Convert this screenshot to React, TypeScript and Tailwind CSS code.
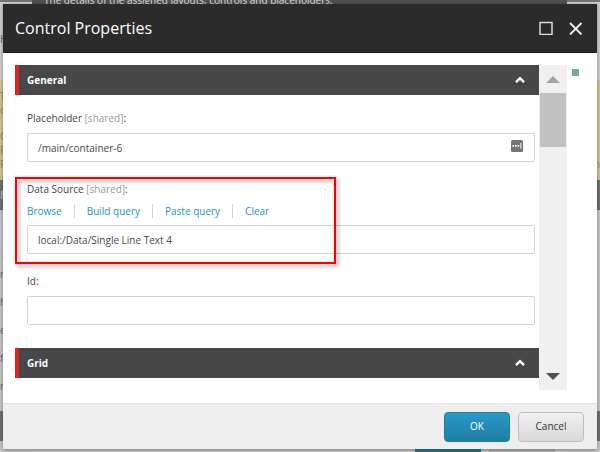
import React from "react";

const actions = ["Browse", "Build query", "Paste query", "Clear"];

function Backdrop() {
  return (
    <div aria-hidden="true" className="absolute inset-0 overflow-hidden text-[10px] leading-[14px] text-[#666]">
      <div className="flex h-full flex-col bg-[#c6c6c6]">
        <div className="h-20 shrink-0 border-t-2 border-[#747474] bg-[#d0d0d0] pt-[30px]">H</div>
        <div className="flex h-[100px] shrink-0 justify-between bg-[#d0c594] pt-[9px] text-[#8f8763]">
          <div>
            <p>T</p>
            <p>c</p>
            <p className="mt-3">C</p>
            <p>F</p>
            <p>P</p>
          </div>
          <p className="pt-[68px]">m</p>
        </div>
        <div className="h-[30px] shrink-0 bg-[#707070] pt-2 font-bold text-[#b8b8b8]">N</div>
        <div className="flex h-[201px] shrink-0 flex-col gap-[14px] pt-[57px]">
          <p>r</p>
          <p>h</p>
          <p>e</p>
          <p>f</p>
          <p>n</p>
        </div>
        <div className="h-[30px] shrink-0 bg-[#707070]" />
      </div>
      <div className="absolute inset-y-0 left-8 right-[33px] flex flex-col justify-between bg-[#c8c8c8]">
        <div className="h-10 bg-[#505050]">
          <p className="-mt-2 whitespace-nowrap pl-3 text-[10px] leading-4 text-[#e0e0e0]">
            The details of the assigned layouts, controls and placeholders.
          </p>
        </div>
        <div className="flex h-8 justify-end gap-2 pr-3">
          <div className="w-[66px] bg-[#257a98]" />
          <div className="w-[66px] bg-[#b2b2b2]" />
        </div>
      </div>
    </div>
  );
}

function SectionHeader({ title }: { title: string }) {
  return (
    <button
      type="button"
      aria-expanded="true"
      className="flex h-[30px] w-full items-center justify-between border-l-4 border-[#e2231a] bg-[#474747] pl-2 pr-[14px] text-[10px] font-bold text-white"
    >
      {title}
      <svg width="10" height="8" viewBox="0 0 10 8" fill="none" stroke="currentColor" strokeWidth="2.4">
        <path d="M1 6.2 5 2.2l4 4" />
      </svg>
    </button>
  );
}

function Label({ id, text, shared }: { id: string; text: string; shared?: boolean }) {
  return (
    <label htmlFor={id} className="block leading-4 text-[#444]">
      {text}
      {shared && <span className="text-[#9a9a9a]"> [shared]</span>}:
    </label>
  );
}

function TextBox({ id, value }: { id: string; value: string }) {
  return (
    <input
      id={id}
      type="text"
      defaultValue={value}
      className="block h-[29px] w-full rounded-xs border border-[#d4d4d4] bg-white px-[10px] text-[10px] text-[#484848] outline-none"
    />
  );
}

export default function App() {
  return (
    <div className="relative min-h-screen overflow-hidden px-[3px] pb-[3px] pt-1 font-['Open_Sans','Noto_Sans',sans-serif] text-[10px]">
      <Backdrop />
      <section
        role="dialog"
        aria-labelledby="dialog-title"
        className="relative bg-white shadow-[0_1px_4px_rgba(0,0,0,0.4)]"
      >
        <header className="flex h-[49px] items-center justify-between border-b border-[#1c1c1c] bg-[#2b2b2b] pl-3 pr-[14px] text-white">
          <h1 id="dialog-title" className="text-[16px] leading-5">
            Control Properties
          </h1>
          <div className="flex items-center gap-4">
            <button type="button" aria-label="Maximize">
              <svg width="14" height="14" viewBox="0 0 14 14" fill="none" stroke="#e4e4e4" strokeWidth="1.4">
                <rect x="1" y="1.5" width="12" height="12" />
              </svg>
            </button>
            <button type="button" aria-label="Close">
              <svg width="14" height="14" viewBox="0 0 14 14" fill="none" stroke="#f0f0f0" strokeWidth="1.8">
                <path d="m1 2 11.5 11.5M12.5 2 1 13.5" />
              </svg>
            </button>
          </div>
        </header>

        <div className="flex pb-[13px] pl-3 pt-3">
          <div className="min-w-0 flex-1 pb-3">
            <SectionHeader title="General" />
            <div className="flex flex-col gap-[19px] pb-[23px] pl-3 pr-1 pt-[15px]">
              <div className="flex flex-col gap-[7px]">
                <Label id="placeholder" text="Placeholder" shared />
                <div className="relative">
                  <TextBox id="placeholder" value="/main/container-6" />
                  <svg className="absolute right-3 top-[7px]" width="12" height="12" viewBox="0 0 12 12">
                    <rect width="12" height="12" rx="1.5" fill="#747474" />
                    <path d="M1.4 5h1.6v1.8H1.4zM4 5h1.6v1.8H4zM6.6 5h1.6v1.8H6.6zM9.4 3h1v5.8h-1z" fill="#fff" />
                  </svg>
                </div>
              </div>
              <div className="relative flex flex-col gap-[6px]">
                <Label id="datasource" text="Data Source" shared />
                <nav className="flex h-4 items-center divide-x divide-[#d4d4d4] leading-[14px] text-[#2694c0]">
                  {actions.map((action) => (
                    <a key={action} href="#" className="px-3 first:pl-0">
                      {action}
                    </a>
                  ))}
                </nav>
                <TextBox id="datasource" value="local:/Data/Single Line Text 4" />
                <div className="pointer-events-none absolute -bottom-[10px] -left-3 -top-1 w-[321px] border-2 border-[#fa0000] drop-shadow-[2px_2px_2px_rgba(0,0,0,0.45)]" />
              </div>
              <div className="flex flex-col gap-[7px]">
                <Label id="item-id" text="Id" />
                <TextBox id="item-id" value="" />
              </div>
            </div>
            <SectionHeader title="Grid" />
          </div>

          <div className="flex w-7 shrink-0 flex-col items-center bg-[#f0f0f0]">
            <div className="flex h-7 items-center">
              <svg width="14" height="7" viewBox="0 0 14 7" fill="#a3a3a3">
                <path d="M0 7 7 0l7 7z" />
              </svg>
            </div>
            <div className="h-[54px] w-[26px] bg-[#c1c1c1]" />
            <div className="mt-auto flex h-7 items-center">
              <svg width="14" height="7" viewBox="0 0 14 7" fill="#505050">
                <path d="m0 0 7 7 7-7z" />
              </svg>
            </div>
          </div>
          <div className="w-[30px] shrink-0 pl-[5px] pt-1">
            <div className="size-[7px] bg-[#78a898]" />
          </div>
        </div>

        <footer className="flex h-[46px] items-center justify-end gap-2 border-t border-[#e0e0e0] bg-[#eee] pr-[13px]">
          <button
            type="button"
            className="h-[30px] w-[66px] rounded-[4px] border border-[#1f7da2] bg-linear-to-b from-[#289bc8] to-[#1f7da2] text-white"
          >
            OK
          </button>
          <button
            type="button"
            className="h-[30px] w-[66px] rounded-[4px] border border-[#bdbdbd] bg-linear-to-b from-[#f0f0f0] to-[#d9d9d9] text-[#333]"
          >
            Cancel
          </button>
        </footer>
      </section>
    </div>
  );
}
